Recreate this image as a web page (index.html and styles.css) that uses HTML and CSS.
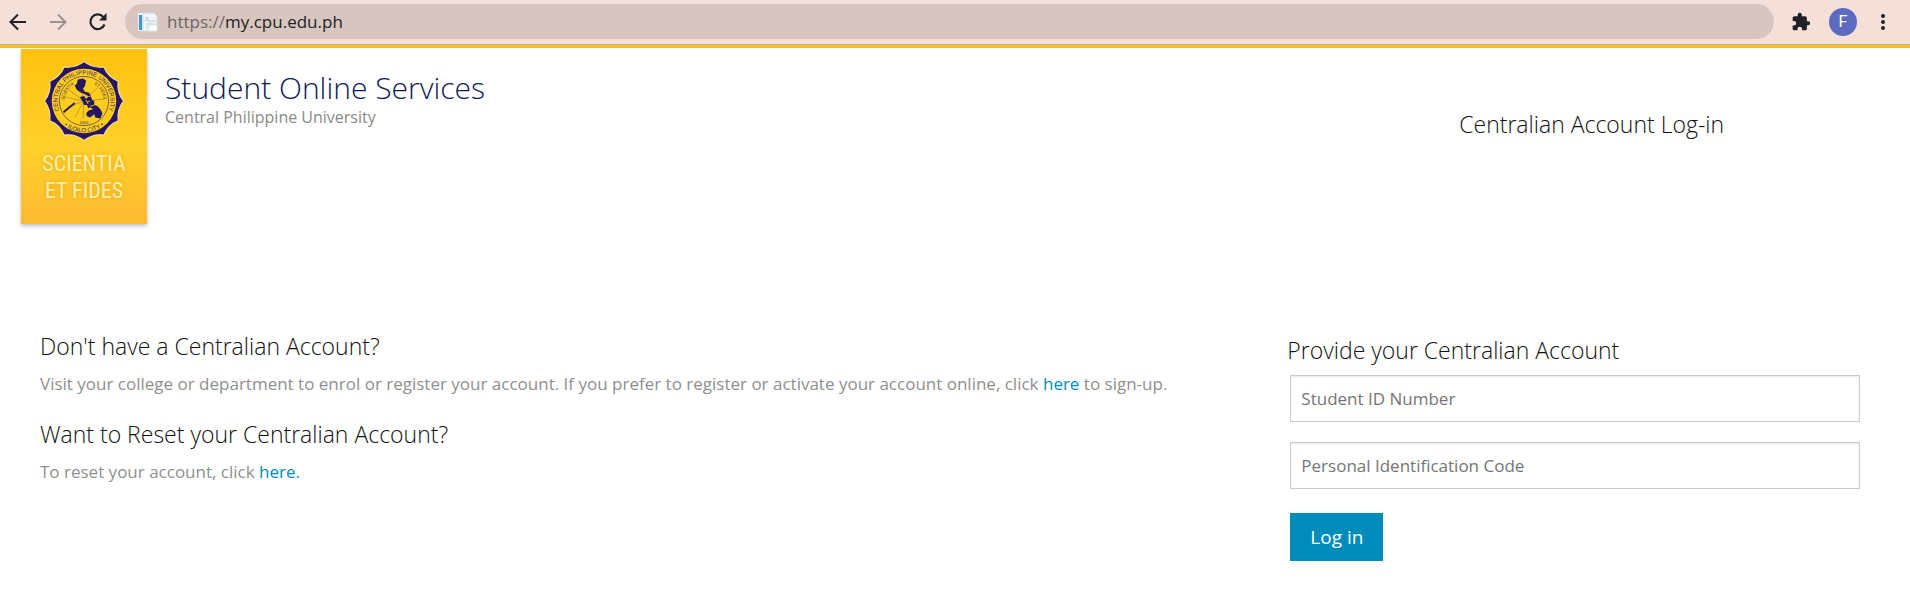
FILE: index.html
```html
<!DOCTYPE html>
<html lang="en">
<head>
    <meta charset="UTF-8">
    <meta name="viewport" content="width=device-width, initial-scale=1.0">
    <title>Student Online Services</title>
    <link rel="stylesheet" href="styles.css">
</head>
<body>
    <div class="toolbar">
        <button class="tool-btn" type="button" aria-label="Back">
            <svg width="20" height="20" viewBox="0 0 20 20" fill="none" stroke="#202124" stroke-width="2"><path d="M18 10H3M10 2.500L2.500 10L10 17.500"/></svg>
        </button>
        <button class="tool-btn" type="button" aria-label="Forward">
            <svg width="20" height="20" viewBox="0 0 20 20" fill="none" stroke="#9b918f" stroke-width="2"><path d="M2 10H17M10 2.500L17.500 10L10 17.500"/></svg>
        </button>
        <button class="tool-btn" type="button" aria-label="Reload">
            <svg width="20" height="20" viewBox="0 0 20 20"><path d="M16.500 12.500A7.300 7.300 0 1 1 15.300 5" fill="none" stroke="#202124" stroke-width="2.200"/><path d="M18.500 1V8.500H11Z" fill="#202124"/></svg>
        </button>
        <div class="address">
            <svg width="22" height="20" viewBox="0 0 22 20">
                <rect x="1" y="1" width="5" height="18" fill="#e9f1f6"/>
                <rect x="2" y="3" width="3" height="15" fill="#4795cd"/>
                <path d="M6 1H17L20 4V19H6Z" fill="#f1f5f7" stroke="#c9dbe5"/>
                <path d="M8 5H12V9H8Z" fill="#cfdfe9"/>
                <path d="M11 9H19M9 12H18M9 15H12" stroke="#b9cdd9"/>
                <rect x="12" y="13" width="8" height="6" fill="#fff" stroke="#d5e0e6"/>
            </svg>
            <span class="url"><span class="scheme">https://</span>my.cpu.edu.ph</span>
        </div>
        <button class="tool-btn" type="button" aria-label="Extensions">
            <svg width="20" height="20" viewBox="0 0 24 24" fill="#202124"><path d="M20.500 11H19V7c0-1.100-.9-2-2-2h-4V3.500a2.500 2.500 0 0 0-5 0V5H4c-1.100 0-2 .9-2 2v3.800h1.500a2.700 2.700 0 0 1 0 5.400H2V20c0 1.100.9 2 2 2h3.800v-1.500a2.700 2.700 0 0 1 5.400 0V22H17c1.100 0 2-.9 2-2v-4h1.500a2.500 2.500 0 0 0 0-5z"/></svg>
        </button>
        <button class="profile" type="button">F</button>
        <button class="tool-btn" type="button" aria-label="Menu">
            <svg width="20" height="20" viewBox="0 0 20 20" fill="#202124"><circle cx="10" cy="4" r="2"/><circle cx="10" cy="10" r="2"/><circle cx="10" cy="16" r="2"/></svg>
        </button>
    </div>

    <header class="header">
        <div class="brand">
            <div class="banner">
                <svg class="seal" width="84" height="84" viewBox="-41 -41 82 82">
                    <defs>
                        <path id="arc-top" d="M-20.200 16A25.800 25.800 0 1 1 20.200 16"/>
                        <path id="arc-bottom" d="M-24 19A30.600 30.600 0 0 0 24 19"/>
                        <path id="arc-left" d="M-19 3A19.200 19.200 0 0 1 -6 -18.200"/>
                        <path id="arc-right" d="M6 -18.200A19.200 19.200 0 0 1 19 3"/>
                    </defs>
                    <path class="seal-edge" d="M0 -38.500Q8.500 -31.900 19.250 -33.300Q23.300 -23.300 33.300 -19.250Q31.900 -8.500 38.500 0Q31.900 8.500 33.300 19.250Q23.300 23.300 19.250 33.300Q8.500 31.900 0 38.500Q-8.500 31.900 -19.250 33.300Q-23.300 23.300 -33.300 19.250Q-31.900 8.500 -38.500 0Q-31.900 -8.500 -33.300 -19.250Q-23.300 -23.300 -19.250 -33.300Q-8.500 -31.900 0 -38.500Z"/>
                    <circle r="31.500" fill="#fccd1c"/>
                    <circle r="24" fill="none" stroke="#5b4a4a" stroke-width=".8"/>
                    <path d="M0 0L-20 -4M0 0L-16 -12M0 0L-3 -18M0 0L14 -14M0 0L20 -2M0 0L-9 16M0 0L-1 17M0 0L-16 6" stroke="#a98a34" stroke-width=".7"/>
                    <path d="M-6 -21L-1 -22L2 -20L1 -15L-1 -12L1 -9L5 -8L7 -4L4 -5L0 -7L-3 -8L-7 -11L-9 -15L-7 -17Z" fill="#281663"/>
                    <path d="M-4 -4L0 -5L2 -2L4 -4L7 -4L8 -1L10 0L10 4L13 5L16 8L18 12L16 17L11 16L10 13L6 16L3 15L2 12L5 9L9 8L6 6L4 7L3 4L0 4L-1 1Z" fill="#281663"/>
                    <path d="M-9 2L-20 11" stroke="#281663" stroke-width="1.800"/>
                    <path d="M6 0L3 1M10 4L6 5M2 -1L4 3" stroke="#fccd1c" stroke-width=".8"/>
                    <text class="seal-name"><textPath href="#arc-top" startOffset="50%">CENTRAL PHILIPPINE UNIVERSITY</textPath></text>
                    <text class="seal-name"><textPath href="#arc-bottom" startOffset="50%">• ILOILO CITY •</textPath></text>
                    <text class="seal-motto"><textPath href="#arc-left" startOffset="50%">SCIENTIA</textPath></text>
                    <text class="seal-motto"><textPath href="#arc-right" startOffset="50%">ET FIDES</textPath></text>
                    <text class="seal-motto" y="22">1905</text>
                </svg>
                <div class="motto">SCIENTIA<br>ET FIDES</div>
            </div>
            <div class="titles">
                <h1>Student Online Services</h1>
                <p>Central Philippine University</p>
            </div>
        </div>
        <h2 class="page-title">Centralian Account Log-in</h2>
    </header>

    <main class="content">
        <section class="help">
            <h3>Don't have a Centralian Account?</h3>
            <p>Visit your college or department to enrol or register your account. If you prefer to register or activate your account online, click <a href="#">here</a> to sign-up.</p>
            <h3>Want to Reset your Centralian Account?</h3>
            <p>To reset your account, click <a href="#">here.</a></p>
        </section>
        <form class="login">
            <h3>Provide your Centralian Account</h3>
            <div class="fields">
                <input type="text" placeholder="Student ID Number" aria-label="Student ID Number">
                <input type="password" placeholder="Personal Identification Code" aria-label="Personal Identification Code">
                <button class="login-btn" type="button">Log in</button>
            </div>
        </form>
    </main>
</body>
</html>
```
FILE: styles.css
```css
* {
    box-sizing: border-box;
}

body {
    margin: 0;
    background-color: #fff;
    color: #111;
    font-family: "Open Sans", "Noto Sans", sans-serif;
}

h1, h2, h3, p {
    margin: 0;
}

a {
    color: #008cba;
    text-decoration: none;
}

/* browser bar */
.toolbar {
    display: flex;
    align-items: center;
    gap: 20px;
    height: 48px;
    padding: 0 17px 2px 8px;
    background-color: #f5e0d9;
    border-bottom: 3px solid #fdc010;
    box-shadow: inset 0 -1px #b9b3b8;
}

.tool-btn {
    display: flex;
    justify-content: center;
    width: 20px;
    padding: 0;
    border: none;
    background: none;
}

.tool-btn svg {
    flex: none;
}

.address {
    flex: 1;
    display: flex;
    align-items: center;
    gap: 8px;
    height: 35px;
    margin: 0 -3px;
    padding: 0 12px;
    border-radius: 18px;
    background-color: #d7c6bf;
}

.url {
    color: #222;
    font-size: 17px;
    line-height: 24px;
}

.scheme {
    color: #6d6562;
}

.profile {
    width: 28px;
    height: 28px;
    margin: 0 -4px 0 -2px;
    padding: 0;
    border: none;
    border-radius: 50%;
    background-color: #5c6bc0;
    color: #fff;
    font: 16px Roboto, sans-serif;
}

/* header */
.header {
    display: grid;
    grid-template-columns: 2fr 1fr;
    padding-top: 1px;
}

.brand {
    display: flex;
    gap: 18px;
    padding-left: 21px;
}

.banner {
    display: flex;
    flex-direction: column;
    align-items: center;
    width: 126px;
    height: 175px;
    padding-top: 10px;
    background: linear-gradient(#ffc20e, #ffd12a 55%, #fdba31);
    box-shadow: 0 2px 4px rgba(60, 60, 120, 0.35);
}

.seal-edge {
    fill: #281663;
    stroke: #f6e3b5;
    stroke-width: 1;
}

.seal-name, .seal-motto {
    fill: #3a2a60;
    font-family: "Liberation Sans", sans-serif;
    font-size: 6px;
    text-anchor: middle;
}

.seal-motto {
    font-size: 4px;
}

.motto {
    padding-top: 7px;
    color: #fff0a8;
    font-family: "Roboto Condensed", Roboto, sans-serif;
    font-size: 22px;
    line-height: 27px;
    text-align: center;
    text-shadow: 0 0 4px #dfa510;
}

.titles {
    padding-top: 19px;
}

.titles h1 {
    color: #0f1a56;
    font-size: 30px;
    font-weight: 300;
    line-height: 40px;
}

.titles p {
    color: #8a8a8a;
    font-size: 16px;
    line-height: 18px;
}

.page-title {
    padding-top: 59px;
    font-size: 23px;
    font-weight: 300;
    line-height: 32px;
    text-align: center;
}

/* content */
.content {
    display: grid;
    grid-template-columns: 2fr 1fr;
    padding-top: 106px;
}

.content h3 {
    font-size: 23px;
    font-weight: 300;
    line-height: 32px;
}

.help {
    padding-left: 40px;
}

.help p {
    padding: 8px 0 20px;
    color: #8f8f8f;
    font-size: 17px;
    line-height: 28px;
}

.login {
    padding: 4px 46px 0 14px;
}

.fields {
    display: flex;
    flex-direction: column;
    align-items: flex-start;
    gap: 20px;
    padding: 9px 4px 9px 3px;
}

.fields input {
    width: 100%;
    height: 47px;
    padding: 0 10px;
    border: 1px solid #ccc;
    background-color: #fff;
    box-shadow: inset 0 1px 2px rgba(0, 0, 0, 0.1);
    font-family: inherit;
    font-size: 17px;
}

.fields input::placeholder {
    color: #757575;
}

.login-btn {
    height: 48px;
    margin-top: 4px;
    padding: 0 20px;
    border: none;
    background-color: #008cba;
    color: #fff;
    font-family: inherit;
    font-size: 19px;
}
```
